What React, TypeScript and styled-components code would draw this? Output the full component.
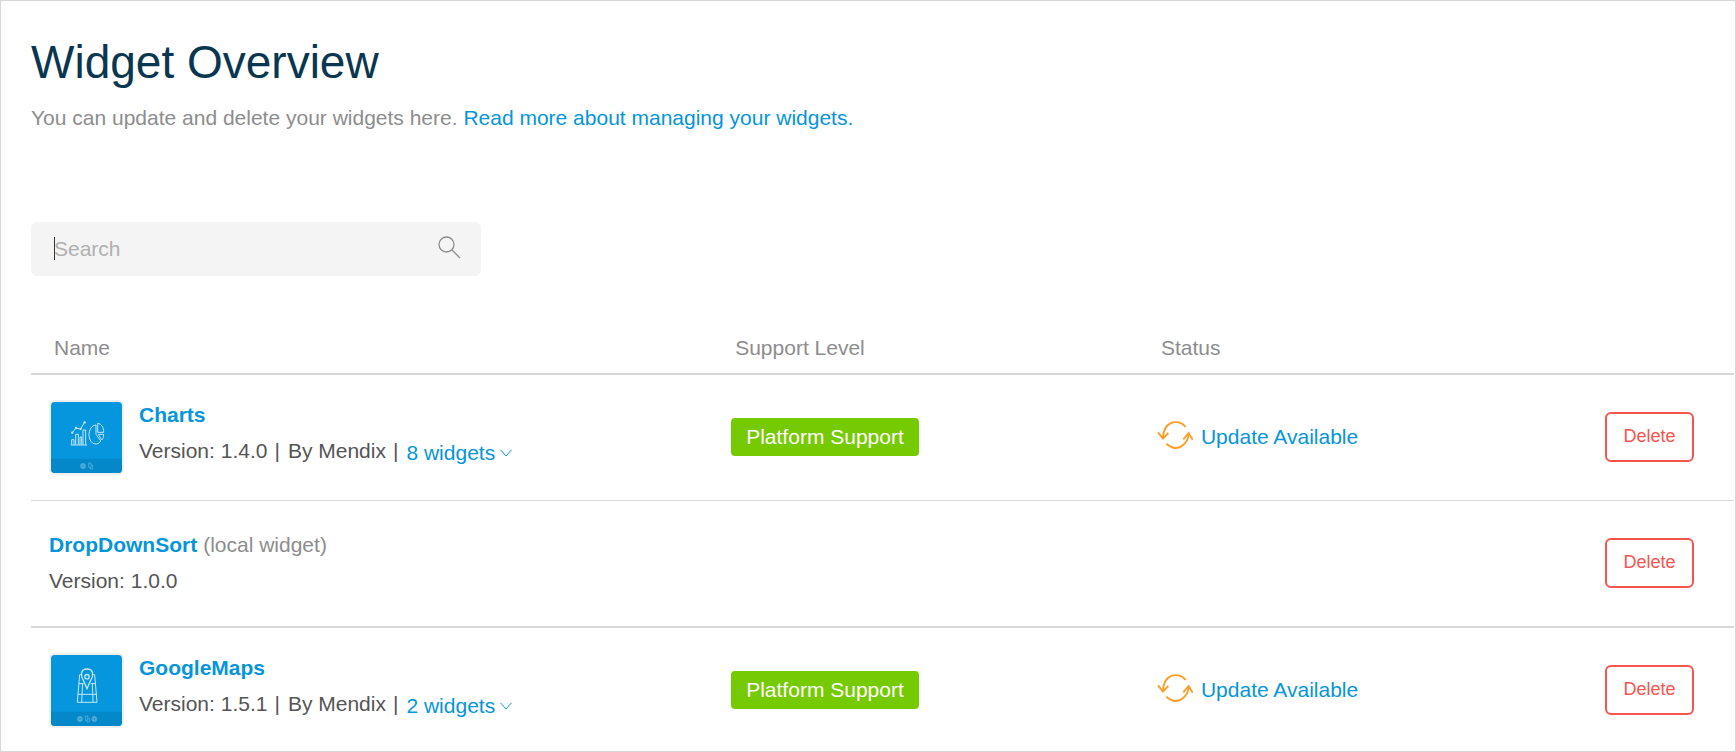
import React from "react";
import styled, { createGlobalStyle } from "styled-components";

const GlobalStyle = createGlobalStyle`
  *, *::before, *::after { box-sizing: border-box; }
  body {
    margin: 0;
    background: #fff;
    color: #555;
    font-family: "Liberation Sans", Arial, Helvetica, sans-serif;
    font-size: 21px;
    line-height: 30px;
  }
`;

const Page = styled.main`
  min-height: 100vh;
  padding: 32px 1px 0 30px;
  border: 1px solid #d7d7d7;
`;

const Title = styled.h1`
  margin: 0;
  color: #0a3650;
  font-size: 46px;
  font-weight: 400;
  line-height: 58px;
`;

const Intro = styled.p`
  margin: 12px 0 0;
  color: #8d8d8d;
`;

const Link = styled.a<{ $strong?: boolean }>`
  color: #0595db;
  font-weight: ${(p) => (p.$strong ? 700 : 400)};
  text-decoration: none;
`;

const SearchBox = styled.label`
  position: relative;
  display: flex;
  align-items: center;
  width: 450px;
  max-width: 100%;
  height: 54px;
  margin-top: 89px;
  padding: 0 20px 0 23px;
  border-radius: 6px;
  background: #f4f4f4;
`;

const SearchInput = styled.input`
  flex: 1;
  min-width: 0;
  padding: 0;
  border: 0;
  outline: 0;
  background: transparent;
  color: #555;
  font: inherit;

  &::placeholder {
    color: #b0b0b0;
    opacity: 1;
  }
`;

const Caret = styled.span`
  position: absolute;
  top: 15px;
  left: 23px;
  width: 1px;
  height: 23px;
  background: #333;
`;

const Table = styled.table`
  width: 100%;
  margin-top: 46px;
  border-collapse: separate;
  border-spacing: 0;
  table-layout: fixed;
`;

const HeadCell = styled.th<{ $width: string }>`
  width: ${(p) => p.$width};
  height: 53px;
  padding: 0 0 0 23px;
  border-bottom: 2px solid #d7d7d7;
  color: #8d8d8d;
  font-weight: 400;
  text-align: left;
`;

const Row = styled.tr<{ $line: number }>`
  height: ${(p) => (p.$line ? 125 + p.$line : 123)}px;

  td {
    border-bottom: ${(p) => p.$line}px solid #d7d7d7;
  }
`;

const Cell = styled.td`
  padding: 0 0 0 19px;
  vertical-align: top;
`;

const NameCell = styled(Cell)`
  padding: 25px 0 0 18px;
`;

const SupportCell = styled(Cell)`
  padding-top: 43px;
`;

const StatusCell = styled(Cell)`
  padding-top: 46px;
`;

const ActionCell = styled(Cell)`
  padding: 37px 40px 0 0;
`;

const Widget = styled.div<{ $plain: boolean }>`
  display: flex;
  gap: 15px;
  padding-top: ${(p) => (p.$plain ? 4 : 0)}px;
`;

const Details = styled.div`
  display: flex;
  flex-direction: column;
  gap: 6px;
`;

const Line = styled.div`
  display: flex;
  gap: 6px;
  height: 30px;
  color: #8d8d8d;
  white-space: nowrap;
`;

const Meta = styled(Line)`
  gap: 7px;
  color: #555;
`;

const Separator = styled.span`
  padding-right: 1px;
`;

const Expand = styled.button`
  display: flex;
  align-items: center;
  gap: 5px;
  height: 32px;
  padding: 2px 0 0;
  border: 0;
  background: none;
  color: #0595db;
  font: inherit;
  cursor: pointer;
`;

const Tile = styled.svg`
  display: block;
  flex: none;
`;

const Badge = styled.span`
  display: block;
  width: fit-content;
  padding: 4px 15px;
  border-radius: 4px;
  background: #76ca02;
  color: #fff;
`;

const Status = styled.div`
  display: flex;
  align-items: center;
  gap: 8px;
`;

const DeleteButton = styled.button`
  display: block;
  width: 89px;
  height: 50px;
  margin-left: auto;
  padding: 0 0 2px;
  border: 2px solid #f6554f;
  border-radius: 6px;
  background: #fff;
  color: #f6554f;
  font: inherit;
  font-size: 18px;
  cursor: pointer;
`;

const SearchIcon = () => (
  <svg width="23" height="26" viewBox="0 0 23 26" fill="none" stroke="#8d8d8d" strokeWidth="1.3" aria-hidden="true">
    <circle cx="8.5" cy="8.5" r="7.5" />
    <path d="M14 14l8 8" />
  </svg>
);

const Chevron = () => (
  <svg width="12" height="8" viewBox="0 0 12 8" fill="none" stroke="#0595db" strokeWidth="1" aria-hidden="true">
    <path d="M.5.8L6 7 11.5.8" />
  </svg>
);

const UpdateIcon = () => (
  <svg width="36" height="32" viewBox="0 0 108 96" fill="none" stroke="#fb9d28" strokeWidth="5.6" aria-hidden="true">
    <path d="M86 18C75 3 55 0 40 7 24 15 18 31 18 52" />
    <path d="M3 34L18 53 34 36" />
    <path d="M28 68C40 81 58 85 73 76 88 67 95 55 95 36" />
    <path d="M79 55L95 36 107 56" />
  </svg>
);

const Globe = ({ x }: { x: number }) => (
  <g transform={`translate(${x} 198)`}>
    <circle r="7.5" />
    <ellipse rx="3.5" ry="7.5" />
    <path d="M-7.5 0H7.5M-6-4H6M-6 4H6" />
  </g>
);

const Devices = ({ x }: { x: number }) => (
  <g transform={`translate(${x} 198)`}>
    <path d="M-6-9H1V4H-6zM1-3H6V9H-1V4" />
  </g>
);

const TileFrame = ({ children, footer }: { children: React.ReactNode; footer: React.ReactNode }) => (
  <Tile width="75" height="75" viewBox="0 0 225 225" fill="none" aria-hidden="true">
    <rect width="225" height="225" rx="16" fill="#f0f0f0" />
    <rect x="6" y="6" width="213" height="213" rx="11" fill="#0596de" />
    <path d="M6 176H219V208A11 11 0 0 1 208 219H17A11 11 0 0 1 6 208z" fill="#0488c9" />
    <g stroke="#c4e6f7" strokeWidth="3">{children}</g>
    <g stroke="#62b6df" strokeWidth="2">{footer}</g>
  </Tile>
);

const ChartsTile = () => (
  <TileFrame footer={<><Globe x={102} /><Devices x={125} /></>}>
    <path d="M65 135H114" />
    <path d="M68 134V119H75V134M80 134V103H88V134M93 134V111H98V134M102 134V90H110V134" />
    <path d="M70 98L81 84 95 87 107 66" />
    <g fill="#c4e6f7" stroke="none">
      <circle cx="70" cy="98" r="3.5" />
      <circle cx="81" cy="84" r="3.5" />
      <circle cx="95" cy="87" r="3.5" />
      <circle cx="107" cy="67" r="3.5" />
    </g>
    <path d="M141 75C113 77 113 133 142 132 149 131 153 127 155 123L141 103z" />
    <path d="M146 70V97H164C164 81 157 71 146 70z" />
    <path d="M148 103H164C164 111 162 116 158 120z" />
  </TileFrame>
);

const MapsTile = () => (
  <TileFrame footer={<><Globe x={93} /><Devices x={115} /><Globe x={136} /></>}>
    <path d="M98 65H92L85 148H144L137 65H131" />
    <path d="M89 92H104M125 92H140M86 124H143M101 90L98 148M130 90L132 148" />
    <path d="M114 48C93 48 95 69 103 82L114 107 125 82C134 69 135 48 114 48z" strokeWidth="4" />
    <circle cx="114" cy="71" r="6.5" strokeWidth="4" />
  </TileFrame>
);

type WidgetRow = {
  name: string;
  version: string;
  author?: string;
  count?: number;
  tile?: React.ReactNode;
  supported?: boolean;
  line: number;
};

const rows: WidgetRow[] = [
  { name: "Charts", version: "1.4.0", author: "Mendix", count: 8, tile: <ChartsTile />, supported: true, line: 1 },
  { name: "DropDownSort", version: "1.0.0", line: 2 },
  { name: "GoogleMaps", version: "1.5.1", author: "Mendix", count: 2, tile: <MapsTile />, supported: true, line: 0 },
];

export default function App() {
  return (
    <>
      <GlobalStyle />
      <Page>
        <Title>Widget Overview</Title>
        <Intro>
          You can update and delete your widgets here. <Link href="#docs">Read more about managing your widgets.</Link>
        </Intro>
        <SearchBox>
          <SearchInput type="text" placeholder="Search" aria-label="Search" />
          <Caret />
          <SearchIcon />
        </SearchBox>
        <Table>
          <thead>
            <tr>
              <HeadCell $width="40%">Name</HeadCell>
              <HeadCell $width="25%">Support Level</HeadCell>
              <HeadCell $width="25%">Status</HeadCell>
              <HeadCell $width="10%" />
            </tr>
          </thead>
          <tbody>
            {rows.map((row) => (
              <Row key={row.name} $line={row.line}>
                <NameCell>
                  <Widget $plain={!row.tile}>
                    {row.tile}
                    <Details>
                      <Line>
                        <Link href="#widget" $strong>{row.name}</Link>
                        {!row.author && <span>(local widget)</span>}
                      </Line>
                      <Meta>
                        <span>Version: {row.version}</span>
                        {row.author && (
                          <>
                            <Separator>|</Separator>
                            <span>By {row.author}</span>
                            <Separator>|</Separator>
                            <Expand type="button">
                              {row.count} widgets
                              <Chevron />
                            </Expand>
                          </>
                        )}
                      </Meta>
                    </Details>
                  </Widget>
                </NameCell>
                <SupportCell>{row.supported && <Badge>Platform Support</Badge>}</SupportCell>
                <StatusCell>
                  {row.supported && (
                    <Status>
                      <UpdateIcon />
                      <Link href="#update">Update Available</Link>
                    </Status>
                  )}
                </StatusCell>
                <ActionCell>
                  <DeleteButton type="button">Delete</DeleteButton>
                </ActionCell>
              </Row>
            ))}
          </tbody>
        </Table>
      </Page>
    </>
  );
}
